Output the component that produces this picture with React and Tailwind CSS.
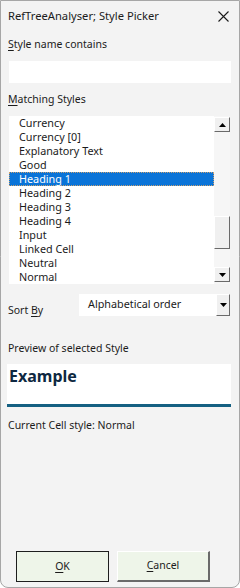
import React from "react";

const items = [
  "Currency",
  "Currency [0]",
  "Explanatory Text",
  "Good",
  "Heading 1",
  "Heading 2",
  "Heading 3",
  "Heading 4",
  "Input",
  "Linked Cell",
  "Neutral",
  "Normal",
];

const font = { fontFamily: '"Noto Sans", "Open Sans", sans-serif' };

function ScrollBtn({ down }) {
  return (
    <div className="w-[16px] h-[15px] bg-[#f0f0f0] border-t border-l border-t-white border-l-white border-r border-b border-r-[#6a6a6a] border-b-[#6a6a6a] flex items-center justify-center">
      <svg width="7" height="4" viewBox="0 0 7 4">
        {down ? <polygon points="0,0 7,0 3.5,4" fill="#000" /> : <polygon points="0,4 7,4 3.5,0" fill="#000" />}
      </svg>
    </div>
  );
}

export default function App() {
  return (
    <div
      className="w-[240px] h-[588px] bg-[#f3f3f3] border border-[#a6a6a6] rounded-b-[8px] flex flex-col text-[#1b1b1b] overflow-hidden"
      style={font}
    >
      {/* title */}
      <div className="h-[30px] flex items-center justify-between pl-[7px] pr-[9px] shrink-0">
        <span className="text-[11.2px] leading-none">RefTreeAnalyser; Style Picker</span>
        <svg width="11" height="11" viewBox="0 0 11 11" className="mr-[1px]">
          <path d="M0.5 0.5 L10.5 10.5 M10.5 0.5 L0.5 10.5" stroke="#1b1b1b" strokeWidth="1.1" />
        </svg>
      </div>

      <div className="px-[7px] mt-[6px] text-[10.5px] leading-[14px]">
        <span className="underline underline-offset-2">S</span>tyle name contains
      </div>
      <div className="ml-[8px] mr-[8px] mt-[10px] h-[22px] bg-white"></div>

      <div className="px-[7px] mt-[9px] text-[10.5px] leading-[14px]">
        <span className="underline underline-offset-2">M</span>atching Styles
      </div>

      <div className="ml-[8px] mr-[9px] mt-[10px] h-[168px] bg-white flex">
        <div className="flex-1 flex flex-col text-[10.8px]">
          {items.map((it) =>
            it === "Heading 1" ? (
              <div
                key={it}
                className="h-[14px] bg-[#0a74d8] text-white pl-[9px] leading-[12px] border border-dotted border-[#c8a070]"
              >
                {it}
              </div>
            ) : (
              <div key={it} className="h-[14px] pl-[10px] leading-[14px]">
                {it}
              </div>
            )
          )}
        </div>
        <div className="w-[16px] bg-[#f6f6f6] flex flex-col pt-[1px] pb-[2px]">
          <ScrollBtn />
          <div className="flex-1 flex flex-col">
            <div className="h-[84px]"></div>
            <div className="h-[33px] bg-[#f0f0f0] border-t border-l border-t-white border-l-white border-r border-b border-r-[#6a6a6a] border-b-[#6a6a6a]"></div>
          </div>
          <ScrollBtn down />
        </div>
      </div>

      <div className="mt-[10px] flex items-start">
        <div className="pl-[7px] pt-[9px] w-[78px] text-[10.5px] leading-[14px]">
          Sort <span className="underline underline-offset-2">B</span>y
        </div>
        <div className="flex-1 mr-[9px] h-[22px] bg-white flex">
          <div className="flex-1 pl-[9px] text-[10.8px] leading-[20px]">Alphabetical order</div>
          <div className="w-[14px] h-[22px] bg-[#f0f0f0] border-t border-l border-t-white border-l-white border-r border-b border-r-[#6a6a6a] border-b-[#6a6a6a] flex items-center justify-center">
            <svg width="7" height="4" viewBox="0 0 7 4">
              <polygon points="0,0 7,0 3.5,4" fill="#000" />
            </svg>
          </div>
        </div>
      </div>

      <div className="px-[7px] mt-[24px] text-[10.5px] leading-[14px]">Preview of selected Style</div>
      <div className="ml-[6px] mr-[8px] mt-[9px] h-[43px] bg-white border-b-[3px] border-[#156082]">
        <div className="pl-[2px] pt-[2px] text-[16px] font-bold leading-[20px] text-[#0e2841]">Example</div>
      </div>

      <div className="px-[7px] mt-[11px] text-[10.5px] leading-[14px]">Current Cell style: Normal</div>

      <div className="mt-auto mb-[5px] flex gap-[8px] pl-[15px]">
        <div className="w-[93px] h-[31px] bg-[#eef5e9] border border-[#1e1e1e] flex items-center justify-center text-[10.5px]">
          <span>
            <span className="underline underline-offset-2">O</span>K
          </span>
        </div>
        <div className="w-[93px] h-[31px] bg-[#eef5e9] border-t border-l border-t-white border-l-white border-r-2 border-b-2 border-r-[#6a6a6a] border-b-[#6a6a6a] flex items-center justify-center text-[10.5px]">
          <span>
            <span className="underline underline-offset-2">C</span>ancel
          </span>
        </div>
      </div>
    </div>
  );
}
